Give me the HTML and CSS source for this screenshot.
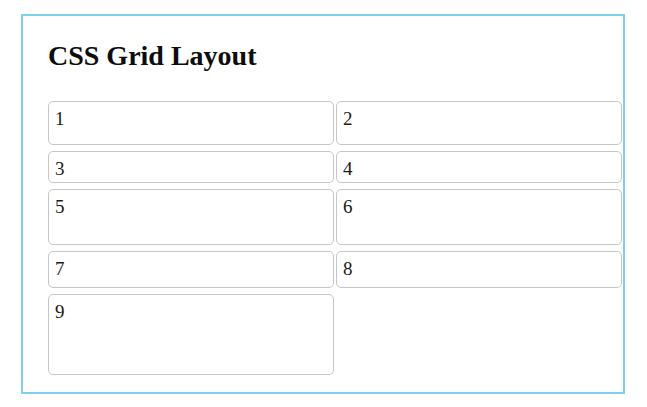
FILE: index.html
```html
<!DOCTYPE html>
<html lang="en">
<head>
<meta charset="utf-8">
<title>CSS Grid Layout</title>
<link rel="stylesheet" href="styles.css">
</head>
<body>
<div class="frame">
  <h1 class="title">CSS Grid Layout</h1>
  <div class="grid">
    <div class="cell">1</div>
    <div class="cell">2</div>
    <div class="cell">3</div>
    <div class="cell">4</div>
    <div class="cell">5</div>
    <div class="cell">6</div>
    <div class="cell">7</div>
    <div class="cell">8</div>
    <div class="cell">9</div>
  </div>
</div>
</body>
</html>
```

FILE: styles.css
```css
html, body {
  margin: 0;
  padding: 0;
  background: #ffffff;
}

body {
  font-family: "Liberation Serif", "Times New Roman", serif;
  color: #111;
}

.frame {
  margin: 14px 22px 0 21px;
  border: 2px solid #7fd0ec;
  padding: 24px 1px 17px 25px;
}

.title {
  margin: 0 0 29px 0;
  font-size: 28px;
  line-height: 32px;
  font-weight: bold;
  color: #0d0d0d;
}

.grid {
  display: grid;
  grid-template-columns: 286px 286px;
  grid-template-rows: 44px 32px 56px 37px 81px;
  column-gap: 2px;
  row-gap: 6px;
}

.cell {
  box-sizing: border-box;
  border: 1px solid #c6c6c6;
  border-radius: 5px;
  padding: 6px 6px;
  font-size: 19px;
  line-height: 22px;
  color: #1a1a1a;
}
```
